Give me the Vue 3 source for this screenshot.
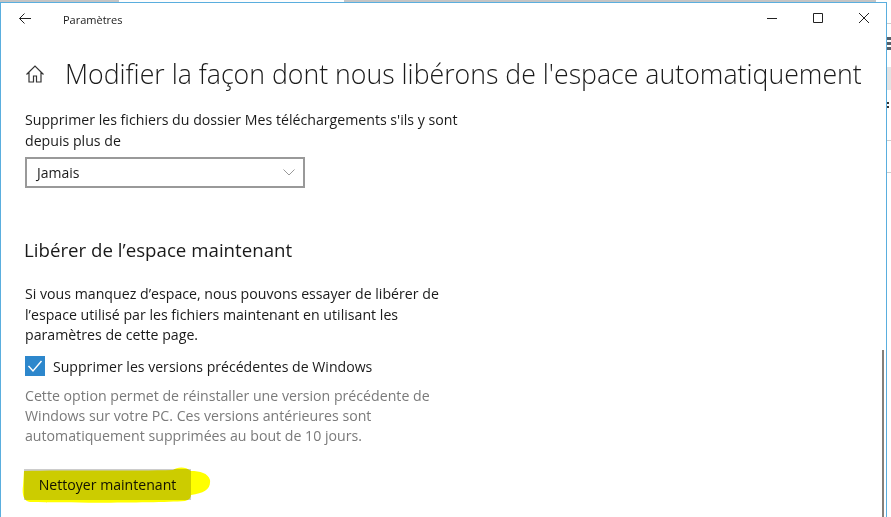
<script setup>
const description = [
  'Cette option permet de réinstaller une version précédente de',
  'Windows sur votre PC. Ces versions antérieures sont',
  'automatiquement supprimées au bout de 10 jours.',
]
const intro = [
  'Si vous manquez d’espace, nous pouvons essayer de libérer de',
  'l’espace utilisé par les fichiers maintenant en utilisant les',
  'paramètres de cette page.',
]
</script>

<template>
  <div class="desktop">
    <div class="behind-strip"></div>
    <div class="window-row">
      <main class="window">
        <header class="titlebar">
          <svg class="back" width="12" height="11" viewBox="0 0 12 11" fill="none" stroke="#222">
            <path d="M.5 5.500H12M5.500.5l-5 5 5 5" />
          </svg>
          <span class="app-name">Paramètres</span>
          <div class="controls">
            <svg width="10" height="10" viewBox="0 0 10 10" stroke="#222" fill="none"><path d="M0 5.500h10" /></svg>
            <svg width="10" height="10" viewBox="0 0 10 10" stroke="#222" fill="none"><path d="M.5.5h9v9h-9z" /></svg>
            <svg width="10" height="10" viewBox="0 0 10 10" stroke="#222" fill="none"><path d="m0 0 10 10M10 0 0 10" /></svg>
          </div>
        </header>

        <div class="heading">
          <svg class="home" width="20" height="20" viewBox="0 0 20 20" fill="none" stroke="#333" stroke-width="1.2">
            <path d="M1.500 10.500 10 2l8.500 8.500M4 8.500V18h4.500v-6h3v6H16V8.500" />
          </svg>
          <h1>Modifier la façon dont nous libérons de l'espace automatiquement</h1>
        </div>

        <section class="content">
          <p class="body-text">Supprimer les fichiers du dossier Mes téléchargements s'ils y sont<br />depuis plus de</p>
          <div class="select">
            <span>Jamais</span>
            <svg width="12" height="7" viewBox="0 0 12 7" fill="none" stroke="#999"><path d="m.5.5 5.500 5.500L11.500.5" /></svg>
          </div>

          <h2>Libérer de l’espace maintenant</h2>
          <p class="body-text intro">
            <template v-for="line in intro" :key="line">{{ line }}<br /></template>
          </p>

          <label class="check-row">
            <span class="checkbox">
              <svg width="20" height="20" viewBox="0 0 20 20" fill="none" stroke="#fff" stroke-width="1.400"><path d="m3.500 10 4.500 5 8.500-10" /></svg>
            </span>
            <span>Supprimer les versions précédentes de Windows</span>
          </label>

          <p class="hint">
            <template v-for="line in description" :key="line">{{ line }}<br /></template>
          </p>

          <div class="action">
            <button class="clean">Nettoyer maintenant</button>
            <!-- felt-pen highlight drawn over the button, hence the multiply -->
            <svg class="marker" width="195" height="42" viewBox="-5 -6 195 42">
              <path d="M-1 2C40 1 110 2 148 1c4-3 12-4 18 1 9 0 17 2 19 9 1 9-6 13-19 15 0 3-2 5-6 6-30 2-110 2-155 1-7-1-8-9-7-16Z" fill="#ff0" />
            </svg>
          </div>
        </section>
        <div class="scrollbar"></div>
      </main>
      <aside class="behind-right">
        <i class="rule r1"></i>
        <i class="ham"></i>
        <i class="band"></i>
        <i class="dots"></i>
        <i class="rule r2"></i>
        <i class="rule r3"></i>
      </aside>
    </div>
  </div>
</template>

<style>
html, body { margin: 0; background: #fff; }
</style>

<style scoped>
.desktop {
  width: 891px;
  height: 517px;
  overflow: hidden;
  display: flex;
  flex-direction: column;
  font-family: "Open Sans", "Noto Sans", sans-serif;
  color: #1a1a1a;
}
.behind-strip {
  height: 2px;
  flex: none;
  background: linear-gradient(to right, #c4c4c4 0 119px, #fdfdfd 119px 344px, #c4c4c4 344px 876px, #fff 876px);
}
.window-row {
  flex: 1;
  display: flex;
  min-height: 0;
}
.window {
  position: relative;
  width: 887px;
  flex: none;
  background: #fff;
  border: 1px solid #5aaede;
  border-bottom: 0;
  box-sizing: border-box;
}
.titlebar {
  height: 32px;
  display: flex;
  align-items: center;
  padding-left: 18px;
}
.back {
  flex: none;
  margin-top: -2px;
}
.app-name {
  margin-left: 32px;
  font-size: 11px;
}
.controls {
  margin-left: auto;
  margin-top: -3px;
  display: flex;
  gap: 36px;
  padding-right: 17px;
  align-items: center;
}
.controls svg { display: block; }
.heading {
  display: flex;
  align-items: center;
  margin-top: 20px;
  padding-left: 24px;
}
.home { flex: none; }
h1 {
  margin: 0 0 0 20px;
  font-size: 26.7px;
  font-weight: 300;
  white-space: nowrap;
  line-height: 38px;
}
.content {
  padding: 16px 0 0 24px;
}
.body-text {
  margin: 0;
  font-size: 14.16px;
  line-height: 21px;
}
.select {
  box-sizing: border-box;
  width: 280px;
  height: 31px;
  margin-top: 6px;
  border: 2px solid #999;
  display: flex;
  align-items: center;
  justify-content: space-between;
  padding: 0 8px 0 10px;
  font-size: 14px;
}
h2 {
  margin: 49px 0 0 -1px;
  font-size: 18.7px;
  font-weight: 400;
  line-height: 26px;
}
.intro {
  margin-top: 21px;
  line-height: 20.5px;
}
.check-row {
  display: flex;
  align-items: center;
  gap: 8px;
  margin-top: 10.5px;
  font-size: 14.1px;
}
.checkbox {
  width: 20px;
  height: 20px;
  background: #2d87cc;
  display: block;
}
.checkbox svg { display: block; }
.hint {
  margin: 10px 0 0;
  font-size: 14.16px;
  line-height: 20px;
  color: #7a7a7a;
}
.action {
  position: relative;
  margin-top: 23px;
  width: 190px;
  height: 34px;
}
.clean {
  display: block;
  width: 167px;
  height: 31px;
  margin-left: -1px;
  border: 0;
  padding: 0;
  background: #ccc;
  color: #111;
  font: inherit;
  font-size: 14.1px;
}
.marker {
  position: absolute;
  left: -5px;
  top: -6px;
  mix-blend-mode: multiply;
  pointer-events: none;
}
.scrollbar {
  position: absolute;
  right: 2px;
  top: 347px;
  bottom: 0;
  width: 2px;
  background: #85807a;
}
.behind-right {
  flex: 1;
  background: #fff;
}
.behind-right i { display: block; }
.rule {
  height: 1px;
  background: #ccc;
}
.r1 { margin-top: 21px; }
.ham {
  height: 13px;
  margin-top: 13px;
  background: repeating-linear-gradient(#54606a 0 3px, #fff 3px 5px);
}
.band {
  height: 23px;
  margin-top: 17px;
  background: #e4e4e4;
}
.dots {
  width: 2px;
  height: 6px;
  margin-top: 12px;
  background: repeating-linear-gradient(#333 0 2px, #fff 2px 4px);
}
.r2 { margin-top: 32px; }
.r3 { margin-top: 31px; }
</style>
